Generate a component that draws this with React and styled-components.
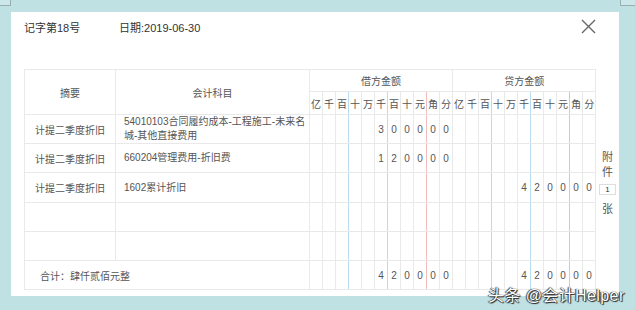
import React from 'react'
import styled, { createGlobalStyle } from 'styled-components'

const GlobalStyle = createGlobalStyle`
	body {
		margin: 0;
		background: #c0e1e3;
		font-family: "Liberation Sans", "Noto Sans CJK SC", sans-serif;
	}
`

const Page = styled.div`
	position: relative;
	width: 635px;
	height: 310px;
	padding: 12px 0 0 11px;
	box-sizing: border-box;
	overflow: hidden;
`

const BackEdge = styled.div`
	position: absolute;
	top: 0;
	left: ${p => (p.$side === 'left' ? '0' : '620px')};
	width: ${p => (p.$side === 'left' ? '10px' : '15px')};
	height: 5px;
	background: #cbe7e9;
	border-bottom: 1px solid #95aeb0;
	${p => (p.$side === 'left' ? 'border-right' : 'border-left')}: 1px solid #95aeb0;
`

const Panel = styled.div`
	width: 608px;
	height: 284px;
	background: #fff;
`

const Header = styled.div`
	display: flex;
	align-items: center;
	height: 30px;
	padding: 0 23px 0 13px;
	font-size: 11px;
	color: #333;
`

const Title = styled.span`
	width: 95px;
`

const Close = styled.svg`
	margin-left: auto;
	margin-top: -1px;
`

const Body = styled.div`
	display: flex;
	align-items: flex-start;
	margin-top: 27px;
	padding-left: 13px;
`

const Table = styled.table`
	border-collapse: collapse;
	table-layout: fixed;
	width: 571px;
	font-size: 10px;
	color: #555;
	th, td {
		border: 1px solid #e9e9e9;
		padding: 0;
		font-weight: normal;
	}
`

const Row = styled.tr`
	height: ${p => p.$h}px;
`

const HeadCell = styled.th`
	text-align: center;
`

const markColor = { blue: '#b8dcf2', red: '#f2bcbc' }

const DigitCell = styled.td`
	text-align: center;
	${p => p.$left && `border-left-color: ${markColor[p.$left]} !important;`}
	${p => p.$right && `border-right-color: ${markColor[p.$right]} !important;`}
`

const DigitHead = styled(DigitCell).attrs({ as: 'th' })`
	font-weight: normal;
`

const Summary = styled.td`
	text-align: center;
`

const Account = styled.td`
	text-align: left;
	padding: 0 0 0 8px !important;
	line-height: 14px;
`

const Total = styled.td`
	text-align: left;
	padding-left: 15px !important;
`

const Attach = styled.div`
	display: flex;
	flex-direction: column;
	align-items: center;
	width: 24px;
	padding-top: 81px;
	font-size: 11px;
	line-height: 15px;
	color: #555;
`

const AttachBox = styled.div`
	width: 17px;
	height: 11px;
	box-sizing: border-box;
	margin: 4px 0 7px;
	border: 1px solid #ddd;
	font-size: 8px;
	line-height: 9px;
	text-align: center;
	color: #333;
`

const Watermark = styled.div`
	position: absolute;
	left: 488px;
	top: 282px;
	font-size: 16px;
	letter-spacing: 0.4px;
	color: #fff;
	text-shadow: 0 0 1px #000, 1px 1px 1px #222, -1px 0 1px #444;
	white-space: nowrap;
`

const units = ['亿', '千', '百', '十', '万', '千', '百', '十', '元', '角', '分']

const leftMark = i => (i === 3 || i === 6 ? 'blue' : i === 9 ? 'red' : undefined)
const rightMark = i => (i === 2 || i === 5 ? 'blue' : i === 8 ? 'red' : undefined)

const toDigits = cents => {
	const s = cents ? String(cents) : ''
	return units.map((_, i) => s[s.length - (units.length - i)] || '')
}

const rows = [
	{ summary: '计提二季度折旧', account: '54010103合同履约成本-工程施工-未来名城-其他直接费用', debit: 300000 },
	{ summary: '计提二季度折旧', account: '660204管理费用-折旧费', debit: 120000 },
	{ summary: '计提二季度折旧', account: '1602累计折旧', credit: 420000, h: 30 },
	{},
	{},
]

const Digits = ({ cents }) =>
	toDigits(cents).map((d, i) => (
		<DigitCell key={i} $left={leftMark(i)} $right={rightMark(i)}>{d}</DigitCell>
	))

const App = () => (
	<Page>
		<GlobalStyle />
		<BackEdge $side="left" />
		<BackEdge $side="right" />
		<Panel>
			<Header>
				<Title>记字第18号</Title>
				<span>日期:2019-06-30</span>
				<Close width="15" height="15" viewBox="0 0 15 15">
					<path d="M1 1L14 14M14 1L1 14" stroke="#666" strokeWidth="1.4" fill="none" />
				</Close>
			</Header>
			<Body>
				<Table>
					<colgroup>
						<col style={{ width: 91 }} />
						<col style={{ width: 194 }} />
						{units.concat(units).map((_, i) => <col key={i} style={{ width: 13 }} />)}
					</colgroup>
					<thead>
						<Row $h={22}>
							<HeadCell rowSpan={2}>摘要</HeadCell>
							<HeadCell rowSpan={2}>会计科目</HeadCell>
							<HeadCell colSpan={11}>借方金额</HeadCell>
							<HeadCell colSpan={11}>贷方金额</HeadCell>
						</Row>
						<Row $h={23}>
							{units.concat(units).map((u, i) => (
								<DigitHead key={i} $left={leftMark(i % 11)} $right={rightMark(i % 11)}>{u}</DigitHead>
							))}
						</Row>
					</thead>
					<tbody>
						{rows.map((r, i) => (
							<Row key={i} $h={r.h || 29}>
								<Summary>{r.summary}</Summary>
								<Account>{r.account}</Account>
								<Digits cents={r.debit} />
								<Digits cents={r.credit} />
							</Row>
						))}
						<Row $h={29}>
							<Total colSpan={2}>合计：肆仟贰佰元整</Total>
							<Digits cents={420000} />
							<Digits cents={420000} />
						</Row>
					</tbody>
				</Table>
				<Attach>
					<span>附</span>
					<span>件</span>
					<AttachBox>1</AttachBox>
					<span>张</span>
				</Attach>
			</Body>
		</Panel>
		<Watermark>头条 @会计Helper</Watermark>
	</Page>
)

export default App
